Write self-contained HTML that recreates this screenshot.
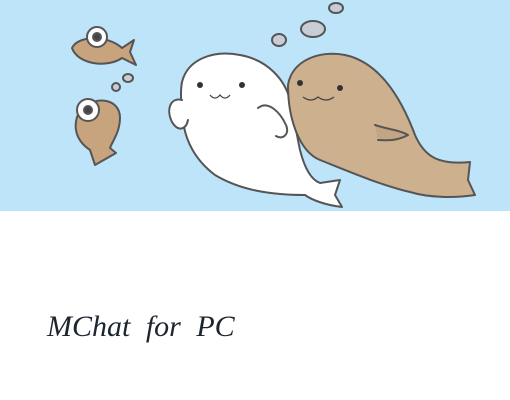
<!DOCTYPE html>
<html><head><style>
html,body{margin:0;padding:0;width:510px;height:400px;background:#fff;overflow:hidden}
.t{position:absolute;left:47px;top:310px;font-family:"Liberation Serif",serif;font-style:italic;font-size:30px;color:#1c2530;word-spacing:8px;white-space:nowrap}
</style></head><body>
<svg width="510" height="400" style="position:absolute;left:0;top:0">
<rect x="0" y="0" width="510" height="211" fill="#bde4f9"/>
<g stroke="#555" stroke-width="2" stroke-linejoin="round" stroke-linecap="round">
<ellipse cx="336" cy="8" rx="7" ry="5" fill="#c8ccd4"/>
<ellipse cx="313" cy="29" rx="12" ry="8" fill="#c8ccd4"/>
<ellipse cx="279" cy="40" rx="7" ry="6" fill="#c8ccd4"/>
<ellipse cx="128" cy="78" rx="5" ry="4" fill="#c8ccd4"/>
<ellipse cx="116" cy="87" rx="4" ry="4" fill="#c8ccd4"/>
<!-- white seal -->
<path d="M182 82 C188 58 215 50 240 55 C268 60 285 80 290 100 L300 150 C305 170 312 180 320 183 L340 180 L335 195 L342 207 C325 205 312 200 305 195 C270 195 240 190 215 175 C195 160 185 140 183 120 C181 105 180 92 182 82 Z" fill="#fff"/>
<path d="M182 100 C170 97 166 110 172 122 C178 132 186 130 188 120" fill="#fff"/>
<!-- brown seal -->
<path d="M288 85 C292 60 320 50 345 55 C378 62 400 95 415 135 C425 158 440 165 470 162 L468 180 L475 195 C455 198 430 198 410 192 C380 185 345 170 320 160 C300 152 288 120 288 85 Z" fill="#cdb18f"/>
<path d="M375 125 C390 130 400 130 408 135 C395 142 385 140 378 140" fill="#c2a582"/>
<path d="M258 108 C268 100 280 112 286 125 C290 135 282 140 276 136" fill="#fff"/>
<!-- fish 1 -->
<path d="M72 48 C78 35 108 35 122 48 L134 40 L130 52 L136 65 L122 58 C108 68 78 65 72 48 Z" fill="#c8a47e"/>
<circle cx="97" cy="37" r="10" fill="#fff"/>
<circle cx="97" cy="37" r="4" fill="#444"/>
<!-- fish 2 -->
<path d="M80 110 C95 95 120 98 120 118 C120 132 112 142 110 148 L116 153 L95 165 L90 150 C75 140 72 125 80 110 Z" fill="#c8a47e"/>
<circle cx="88" cy="110" r="11" fill="#fff"/>
<circle cx="88" cy="110" r="4" fill="#444"/>
</g>
<g fill="#333">
<circle cx="200" cy="85" r="3"/><circle cx="242" cy="85" r="3"/>
<circle cx="300" cy="83" r="3"/><circle cx="340" cy="88" r="3"/>
</g>
<g stroke="#444" stroke-width="1.3" fill="none">
<path d="M210 95 q5 6 10 0 q5 6 10 0"/>
<path d="M303 97 q8 6 15 0 q8 6 16 0"/>
</g>
</svg>
<div class="t">MChat for PC</div>
</body></html>
